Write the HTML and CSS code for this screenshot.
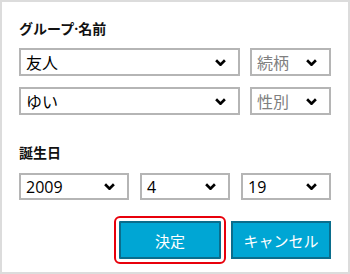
FILE: index.html
```html
<!DOCTYPE html>
<html lang="ja">
<head>
    <meta charset="UTF-8">
    <meta name="viewport" content="width=device-width, initial-scale=1.0">
    <title>連絡先の編集</title>
    <link rel="stylesheet" href="styles.css">
</head>
<body>
    <div id="panel">
        <div class="label">グループ·名前</div>
        <div class="row two">
            <div class="select"><span>友人</span><svg viewBox="0 0 10 6"><polyline points="1,1 5,5 9,1"/></svg></div>
            <div class="select empty"><span>続柄</span><svg viewBox="0 0 10 6"><polyline points="1,1 5,5 9,1"/></svg></div>
        </div>
        <div class="row two">
            <div class="select"><span>ゆい</span><svg viewBox="0 0 10 6"><polyline points="1,1 5,5 9,1"/></svg></div>
            <div class="select empty"><span>性別</span><svg viewBox="0 0 10 6"><polyline points="1,1 5,5 9,1"/></svg></div>
        </div>

        <div class="label birthday">誕生日</div>
        <div class="row three">
            <div class="select"><span>2009</span><svg viewBox="0 0 10 6"><polyline points="1,1 5,5 9,1"/></svg></div>
            <div class="select"><span>4</span><svg viewBox="0 0 10 6"><polyline points="1,1 5,5 9,1"/></svg></div>
            <div class="select"><span>19</span><svg viewBox="0 0 10 6"><polyline points="1,1 5,5 9,1"/></svg></div>
        </div>

        <div id="buttons">
            <button class="btn focused">決定</button>
            <button class="btn cancel">キャンセル</button>
        </div>
    </div>
</body>
</html>
```
FILE: styles.css
```css
body {
    margin: 0;
    font-family: 'Open Sans', 'Noto Sans CJK JP', sans-serif;
    background-color: white;
}

#panel {
    width: 350px;
    height: 274px;
    box-sizing: border-box;
    border: 2px solid #dcdcdc;
    padding: 17px 17px 0 17px;
}

.label {
    font-size: 14px;
    font-weight: bold;
    line-height: 20px;
    color: #111;
    margin-bottom: 9px;
}

.birthday {
    margin-top: 28px;
    margin-bottom: 10px;
}

.row {
    display: grid;
    margin-bottom: 11px;
}

.two {
    grid-template-columns: 1fr 81px;
    column-gap: 10px;
}

.three {
    grid-template-columns: 110px 90px 90px;
    justify-content: space-between;
    margin-bottom: 0;
}

.select {
    height: 28px;
    box-sizing: border-box;
    border: 2px solid #b5b5b5;
    display: flex;
    align-items: center;
    justify-content: space-between;
    padding: 0 12px 0 5px;
    font-size: 16px;
    color: #000;
}

.three .select {
    height: 27px;
}

.select svg {
    width: 11px;
    height: 7px;
    fill: none;
    stroke: #000;
    stroke-width: 2.4;
}

.empty {
    color: #808080;
}

#buttons {
    display: flex;
    justify-content: flex-end;
    gap: 10px;
    margin-top: 21px;
}

.btn {
    width: 102px;
    height: 38px;
    box-sizing: border-box;
    background-color: #00a6d4;
    border: 2px solid #0a6d8c;
    color: white;
    font-family: 'Open Sans', 'Noto Sans CJK JP', sans-serif;
    font-size: 15px;
    padding: 0;
}

.cancel {
    width: 100px;
}

.focused {
    outline: 2px solid #e8000b;
    outline-offset: 3px;
    border-radius: 1px;
}
```
